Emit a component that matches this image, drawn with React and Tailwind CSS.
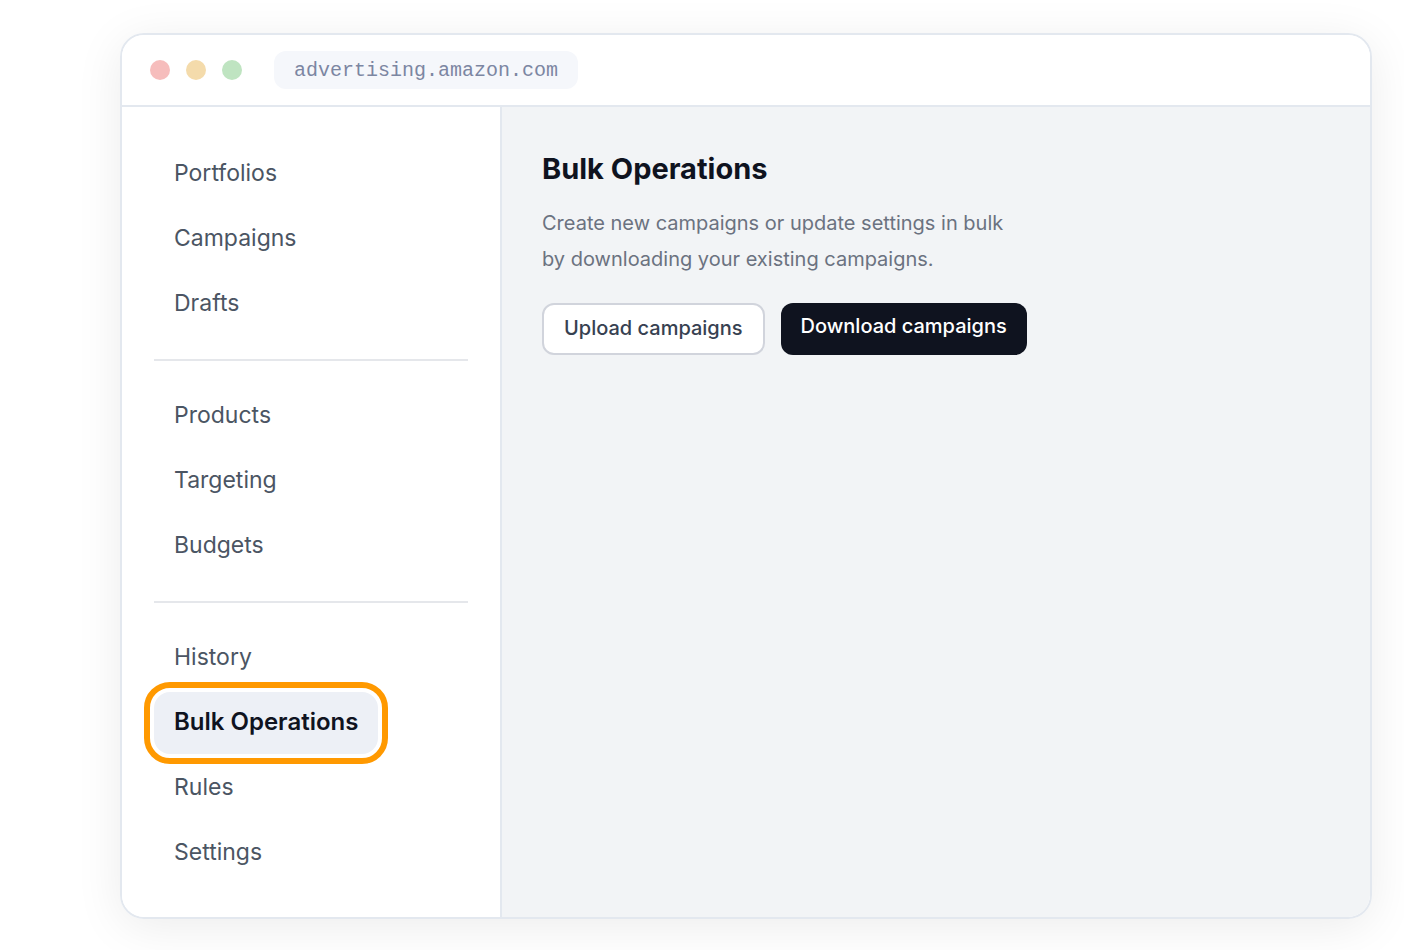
const groups = [
  ["Portfolios", "Campaigns", "Drafts"],
  ["Products", "Targeting", "Budgets"],
  ["History", "Bulk Operations", "Rules", "Settings"],
];

function NavItem({ label }) {
  const active = label === "Bulk Operations";
  return (
    <a
      href="#"
      aria-current={active ? "page" : undefined}
      className={
        active
          ? "w-fit rounded-2xl bg-[#edf0f6] px-5 pt-[14px] pb-4 text-2xl leading-8 font-semibold text-[#0f131f] outline-6 outline-offset-4 outline-[#ff9900]"
          : "w-fit rounded-2xl px-5 pt-[14px] pb-4 text-[23px] leading-8 text-[#4b5563]"
      }
    >
      {label}
    </a>
  );
}

function TitleBar() {
  return (
    <header className="flex h-[72px] shrink-0 items-center gap-8 border-b-2 border-[#e3e8ef] bg-white px-7">
      <div className="flex gap-4">
        <span className="size-5 rounded-full bg-[#f6bdbc]" />
        <span className="size-5 rounded-full bg-[#f4dbab]" />
        <span className="size-5 rounded-full bg-[#bfe4c1]" />
      </div>
      <div className="rounded-xl bg-[#f5f7fb] px-5 pt-[5px] pb-[3px] font-['Liberation_Mono',monospace] text-xl leading-[30px] text-[#7c86a2]">
        advertising.amazon.com
      </div>
    </header>
  );
}

export default function App() {
  return (
    <div className="flex min-h-screen bg-white pt-[33px] pr-8 pb-[31px] pl-[120px] font-[Inter,sans-serif]">
      <div className="flex flex-1 flex-col overflow-hidden rounded-3xl border-2 border-[#e3e8ef] shadow-[0_8px_48px_rgba(0,0,0,0.08)]">
        <TitleBar />
        <div className="flex flex-1">
          <nav className="w-[380px] shrink-0 border-r-2 border-[#e3e8ef] bg-white px-8 pt-9 pb-8">
            {groups.map((items, index) => (
              <div key={items[0]}>
                {index > 0 && <hr className="my-6 border-t-2 border-[#e5e7eb]" />}
                <div className="flex flex-col gap-[3px]">
                  {items.map((label) => (
                    <NavItem key={label} label={label} />
                  ))}
                </div>
              </div>
            ))}
          </nav>
          <main className="flex-1 bg-[#f2f4f6] px-10 py-10">
            <h1 className="text-[29px] leading-[44px] font-bold text-[#0f131f]">Bulk Operations</h1>
            <p className="mt-[14px] max-w-[480px] text-xl leading-9 text-[#6b7280]">
              Create new campaigns or update settings in bulk by downloading your existing campaigns.
            </p>
            <div className="mt-[26px] flex items-stretch gap-4">
              <button className="flex items-start rounded-xl border-2 border-[#d1d4dc] bg-white px-5 pt-2 pb-[10px] text-xl leading-[30px] font-medium text-[#374151]">
                Upload campaigns
              </button>
              <button className="flex items-start rounded-xl bg-[#0f131f] px-5 pt-2 pb-[10px] text-xl leading-[30px] font-medium text-white">
                Download campaigns
              </button>
            </div>
          </main>
        </div>
      </div>
    </div>
  );
}
